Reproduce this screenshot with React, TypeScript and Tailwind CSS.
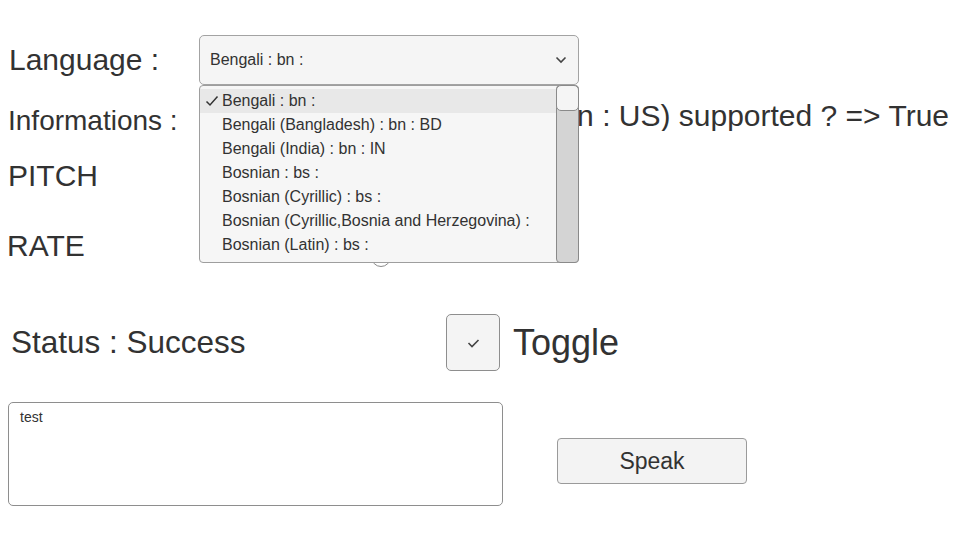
const items = [
  "Bengali : bn :",
  "Bengali (Bangladesh) : bn : BD",
  "Bengali (India) : bn : IN",
  "Bosnian : bs :",
  "Bosnian (Cyrillic) : bs :",
  "Bosnian (Cyrillic,Bosnia and Herzegovina) :",
  "Bosnian (Latin) : bs :",
];

function Slider({ knob }: { knob: number }) {
  return (
    <div className="relative ml-[110px] h-[20px] w-[360px]">
      <div className="absolute left-0 right-0 top-[7px] h-[6px] rounded-full bg-[#d6d6d6]" />
      <div
        className="absolute top-0 h-[20px] w-[20px] rounded-full border border-[#8a8a8a] bg-white"
        style={{ left: knob }}
      />
    </div>
  );
}

export default function App() {
  return (
    <div className="relative h-[540px] w-[960px] overflow-hidden bg-white font-['Liberation_Sans',Arial,sans-serif] text-[#323232]">
      {/* language row */}
      <div className="flex items-center pt-[35px]">
        <div className="w-[199px] pl-[9px] text-[30px] leading-none">Language :</div>
        <div className="flex h-[50px] w-[380px] items-center justify-between rounded-[5px] border border-[#a3a3a3] bg-[#f5f5f5] pl-[10px] pr-[10px]">
          <span className="text-[16px]">Bengali : bn :</span>
          <svg width="12" height="8" viewBox="0 0 12 8" className="mr-[1px]">
            <path d="M1.5 1.5 L6 6 L10.5 1.5" fill="none" stroke="#444" strokeWidth="1.6" />
          </svg>
        </div>
      </div>

      {/* informations row */}
      <div className="mt-[18px] flex h-[36px] items-center">
        <div className="w-[199px] shrink-0 pl-[8px] text-[28px] leading-none">Informations :</div>
        <div className="-mt-[10px] flex flex-1 justify-end overflow-hidden pr-[11px]">
          <span className="whitespace-nowrap text-[30px] leading-none">
            Language (English (United States) : en : US) supported ? =&gt; True
          </span>
        </div>
      </div>

      {/* pitch */}
      <div className="mt-[19px] flex h-[36px] items-center">
        <div className="w-[95px] pl-[8px] text-[30px] leading-none">PITCH</div>
        <Slider knob={175} />
      </div>

      {/* rate */}
      <div className="mt-[34px] flex h-[36px] items-center">
        <div className="w-[95px] pl-[7px] text-[30px] leading-none">RATE</div>
        <div className="mt-[22px]">
          <Slider knob={166} />
        </div>
      </div>

      {/* status + toggle */}
      <div className="mt-[50px] flex items-center">
        <div className="w-[446px] pl-[11px] text-[31.5px] leading-none">Status : Success</div>
        <div className="flex h-[57px] w-[54px] items-center justify-center rounded-[5px] border border-[#8e8e8e] bg-[#f4f4f4]">
          <svg width="13" height="10" viewBox="0 0 13 10">
            <path d="M1.5 5 L5 8.5 L11.5 2" fill="none" stroke="#444" strokeWidth="1.6" />
          </svg>
        </div>
        <div className="ml-[13px] text-[36px] leading-none">Toggle</div>
      </div>

      {/* text + speak */}
      <div className="mt-[31px] flex items-start">
        <div className="ml-[8px] h-[104px] w-[495px] rounded-[5px] border border-[#8e8e8e] bg-white px-[11px] pt-[7px] text-[14px] leading-none">
          test
        </div>
        <button className="ml-[54px] mt-[36px] h-[46px] w-[190px] rounded-[4px] border border-[#9a9a9a] bg-[#f3f3f3] text-[23px] leading-none text-[#323232]">
          Speak
        </button>
      </div>

      {/* open dropdown list */}
      <div className="absolute left-[199px] top-[85px] flex h-[178px] w-[380px] rounded-[4px] border border-[#9e9e9e] bg-[#f6f6f6]">
        <div className="flex-1 pt-[3px]">
          {items.map((t, i) => (
            <div
              key={t}
              className={`flex h-[24px] items-center text-[16px] leading-none ${i === 0 ? "bg-[#e8e8e8]" : ""}`}
            >
              <span className="flex w-[22px] justify-end pr-[3px]">
                {i === 0 && (
                  <svg width="14" height="12" viewBox="0 0 14 12">
                    <path d="M1.5 6.5 L5 10 L12.5 1.5" fill="none" stroke="#333" strokeWidth="1.5" />
                  </svg>
                )}
              </span>
              <span className="whitespace-nowrap">{t}</span>
            </div>
          ))}
        </div>
        <div className="-mr-px -mt-px h-[178px] w-[23px] rounded-[4px] border border-[#8a8a8a] bg-[#d4d4d4]">
          <div className="-ml-px -mt-px h-[26px] w-[23px] rounded-[5px] border border-[#8a8a8a] bg-[#f5f5f5]" />
        </div>
      </div>
    </div>
  );
}
